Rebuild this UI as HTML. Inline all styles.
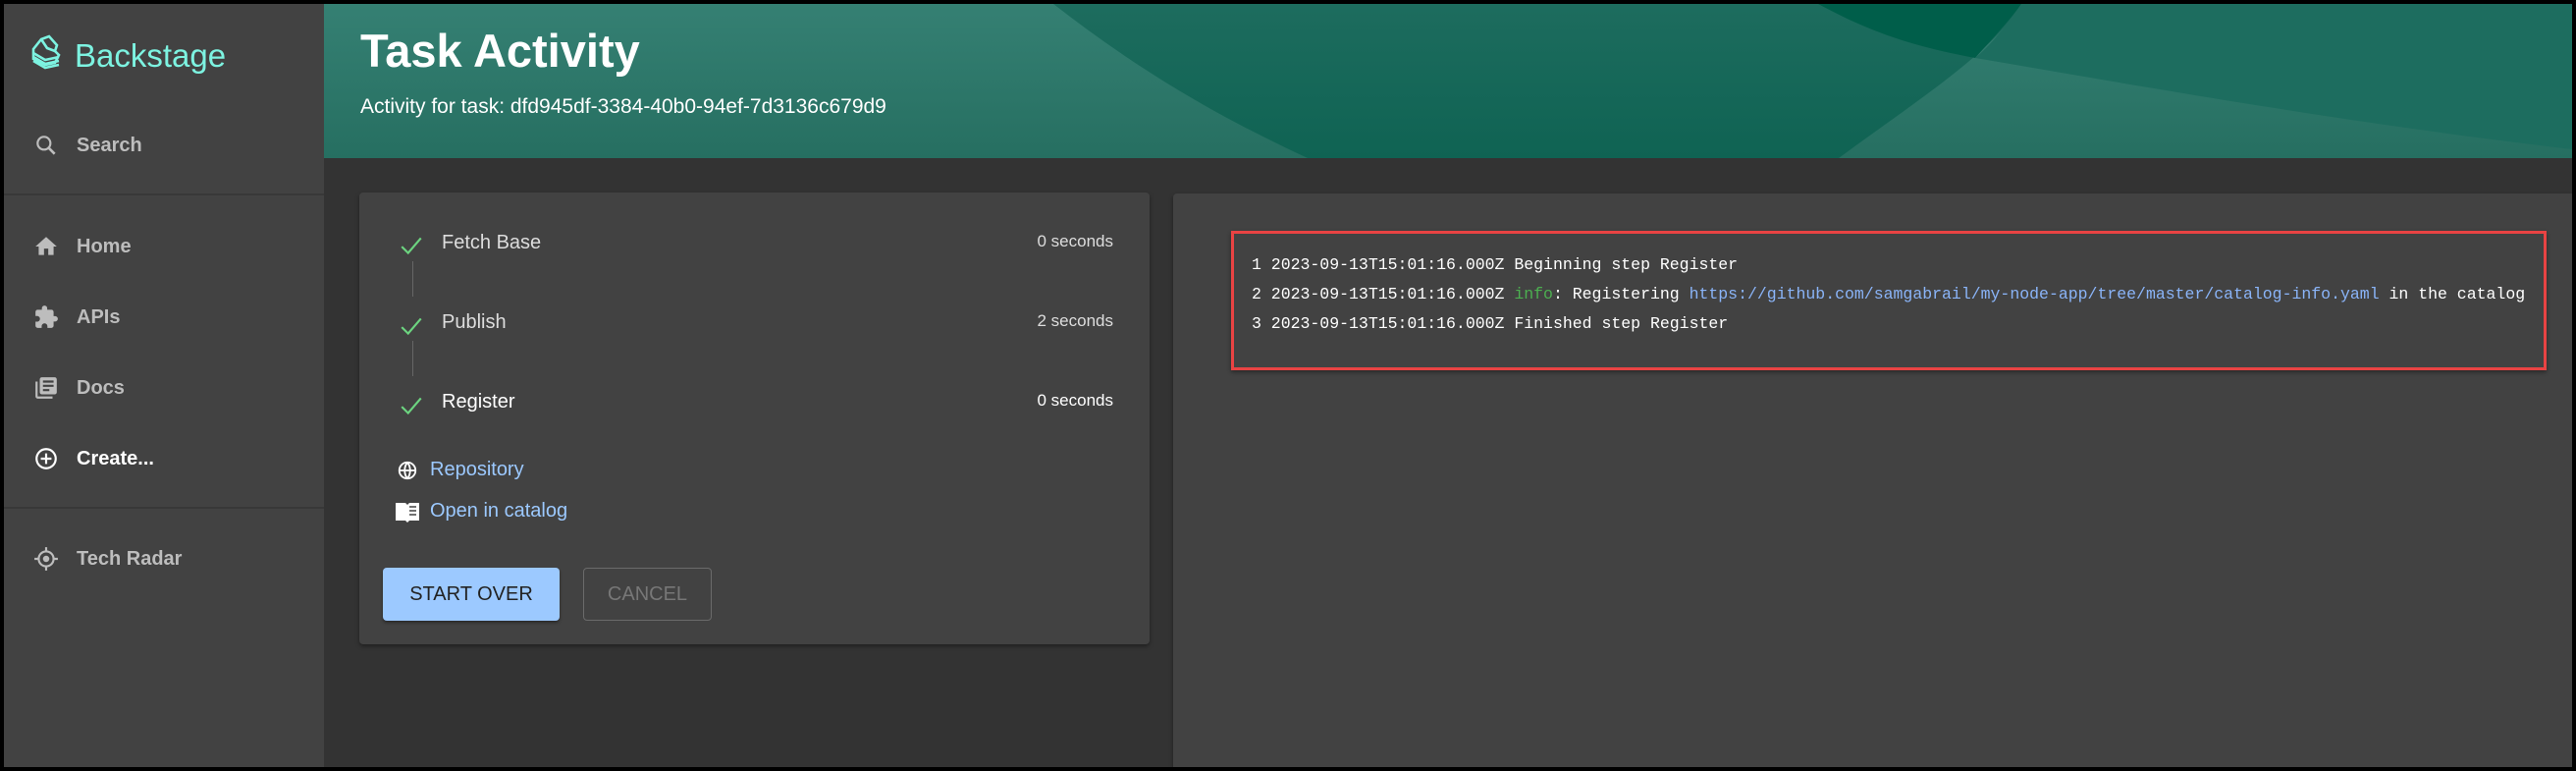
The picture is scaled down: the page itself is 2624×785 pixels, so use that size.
<!DOCTYPE html>
<html><head><meta charset="utf-8"><style>
*{box-sizing:border-box;margin:0;padding:0}
body{width:2624px;height:785px;background:#000;font-family:"Liberation Sans",sans-serif;overflow:hidden;position:relative}
#wrap{position:absolute;left:4px;top:4px;width:2616px;height:777px;background:#333;overflow:hidden}
#side{position:absolute;left:0;top:0;width:326px;height:777px;background:#424242}
.logo{position:absolute;left:72px;top:34px;font-size:33px;color:#7df3e1}
.nav{position:absolute;left:74px;font-size:20px;font-weight:bold;color:#bdbdbd}
.ic{position:absolute;left:30px;width:26px;height:26px}
.div{position:absolute;left:0;width:326px;height:2px;background:#383838}
#hdr{position:absolute;left:326px;top:0;width:2290px;height:157px;overflow:hidden}
h1{position:absolute;left:37px;top:20px;font-size:47px;color:#fff;font-weight:bold}
.sub{position:absolute;left:37px;top:93px;font-size:21px;color:#fff}
.card{position:absolute;background:#424242;box-shadow:0 2px 4px rgba(0,0,0,.4);border-radius:4px}
.st{position:absolute;left:446px;font-size:20px;color:#ddd}
.sec{position:absolute;right:1486px;font-size:17px;color:#ddd}
.vl{position:absolute;left:416px;width:1px;height:36px;background:#666}
.lnk{position:absolute;left:434px;font-size:20px;color:#9cc9ff}
.log{position:absolute;left:1271px;font-family:"Liberation Mono",monospace;font-size:16.5px;color:#fff;white-space:pre}
</style></head><body><div id="wrap">
<div id="side">
<svg style="position:absolute;left:26px;top:30px" width="36" height="40" viewBox="0 0 36 40" fill="none" stroke="#7df3e1" stroke-width="2.6"><path d="M4 16 L12 6 L20 3 L28 12 L26 18 L30 22 L26 30 L16 32 L4 26 Z"/><path d="M4 20 L16 27 L30 24"/><path d="M4 24 L16 31 L30 28"/><path d="M4 28 L16 35 L30 32"/><path d="M12 6 L18 15 L26 18"/></svg>
<div class="logo">Backstage</div>
<svg class="ic" style="top:131px" viewBox="0 0 24 24"><circle cx="10" cy="10" r="6" fill="none" stroke="#bdbdbd" stroke-width="2"/><path d="M14.5 14.5 L20 20" stroke="#bdbdbd" stroke-width="2.4"/></svg>
<div class="nav" style="top:133px">Search</div>
<div class="div" style="top:193px"></div>
<svg class="ic" style="top:234px" viewBox="0 0 24 24"><path d="M10 20v-6h4v6h5v-8h3L12 3 2 12h3v8z" fill="#bdbdbd"/></svg>
<div class="nav" style="top:236px">Home</div>
<svg class="ic" style="top:306px" viewBox="0 0 24 24"><path d="M20.5 11H19V7c0-1.1-.9-2-2-2h-4V3.5a2.5 2.5 0 00-5 0V5H4c-1.1 0-2 .9-2 2v3.8h1.5c1.5 0 2.7 1.2 2.7 2.7S5 16.2 3.5 16.2H2V20c0 1.1.9 2 2 2h3.800v-1.5c0-1.5 1.2-2.7 2.7-2.7s2.7 1.2 2.7 2.7V22H17c1.1 0 2-.9 2-2v-4h1.5a2.5 2.5 0 000-5z" fill="#bdbdbd"/></svg>
<div class="nav" style="top:308px">APIs</div>
<svg class="ic" style="top:378px" viewBox="0 0 24 24"><path d="M4 6H2v14c0 1.1.9 2 2 2h14v-2H4V6zm16-4H8c-1.1 0-2 .9-2 2v12c0 1.1.9 2 2 2h12c1.1 0 2-.9 2-2V4c0-1.1-.9-2-2-2zm-1 9H9V9h10v2zm-4 4H9v-2h6v2zm4-8H9V5h10v2z" fill="#bdbdbd"/></svg>
<div class="nav" style="top:380px">Docs</div>
<svg class="ic" style="top:450px" viewBox="0 0 24 24"><circle cx="12" cy="12" r="9" fill="none" stroke="#fff" stroke-width="2"/><path d="M12 7v10M7 12h10" stroke="#fff" stroke-width="2"/></svg>
<div class="nav" style="top:452px;color:#fff">Create...</div>
<div class="div" style="top:512px"></div>
<svg class="ic" style="top:552px" viewBox="0 0 24 24"><circle cx="12" cy="12" r="7" fill="none" stroke="#bdbdbd" stroke-width="2"/><circle cx="12" cy="12" r="3" fill="#bdbdbd"/><path d="M12 1v4M12 19v4M1 12h4M19 12h4" stroke="#bdbdbd" stroke-width="2"/></svg>
<div class="nav" style="top:554px">Tech Radar</div>
</div>
<div id="hdr">
<svg width="2290" height="157" viewBox="0 0 2290 157">
<defs>
<linearGradient id="g" x1="0" y1="0" x2="0" y2="1"><stop offset="0" stop-color="#358073"/><stop offset="1" stop-color="#266f61"/></linearGradient>
<linearGradient id="d" x1="0" y1="0" x2="0" y2="1"><stop offset="0" stop-color="#1d6c5e"/><stop offset="1" stop-color="#0f6353"/></linearGradient>
</defs>
<rect width="2290" height="157" fill="url(#g)"/>
<path d="M743 0 C820 60 900 110 1002 157 L1543 157 C1620 100 1700 50 1729 0 Z" fill="url(#d)"/>
<path d="M1522 0 L1729 0 C1715 20 1695 40 1682 55 C1600 40 1560 20 1522 0 Z" fill="#005e4a"/>
<path d="M1729 0 L2290 0 L2290 148 C2050 120 1830 80 1682 55 C1700 40 1715 20 1729 0 Z" fill="#1d6d5f"/>
</svg>
<h1>Task Activity</h1>
<div class="sub">Activity for task: dfd945df-3384-40b0-94ef-7d3136c679d9</div>
</div>
<div class="card" style="left:362px;top:192px;width:805px;height:460px"></div>
<div class="card" style="left:1191px;top:193px;width:1430px;height:600px"></div>
<svg style="position:absolute;left:402px;top:233px" width="26" height="26" viewBox="0 0 24 24"><path d="M3 13l6 6L21 5" fill="none" stroke="#6cd480" stroke-width="2"/></svg>
<svg style="position:absolute;left:402px;top:315px" width="26" height="26" viewBox="0 0 24 24"><path d="M3 13l6 6L21 5" fill="none" stroke="#6cd480" stroke-width="2"/></svg>
<svg style="position:absolute;left:402px;top:396px" width="26" height="26" viewBox="0 0 24 24"><path d="M3 13l6 6L21 5" fill="none" stroke="#6cd480" stroke-width="2"/></svg>
<div class="vl" style="top:262px"></div><div class="vl" style="top:343px"></div>
<div class="st" style="top:232px">Fetch Base</div>
<div class="st" style="top:313px">Publish</div>
<div class="st" style="top:394px;color:#fff">Register</div>
<div class="sec" style="top:232px">0 seconds</div>
<div class="sec" style="top:313px">2 seconds</div>
<div class="sec" style="top:394px;color:#fff">0 seconds</div>
<svg style="position:absolute;left:400px;top:464px" width="22" height="22" viewBox="0 0 24 24" fill="none" stroke="#fff" stroke-width="2"><circle cx="12" cy="12" r="9"/><path d="M3 12h18M12 3c-4 5-4 13 0 18M12 3c4 5 4 13 0 18"/></svg>
<div class="lnk" style="top:463px">Repository</div>
<svg style="position:absolute;left:398px;top:506px" width="26" height="22" viewBox="0 0 26 22"><path d="M1 2h10l2 2 2-2h10v18H15l-2 2-2-2H1z" fill="#fff"/><path d="M15 6h7M15 10h7M15 14h7" stroke="#424242" stroke-width="1.5"/></svg>
<div class="lnk" style="top:505px">Open in catalog</div>
<div style="position:absolute;left:386px;top:574px;width:180px;height:54px;background:#9cc9ff;border-radius:4px;box-shadow:0 2px 3px rgba(0,0,0,.4);color:#222;font-size:20px;text-align:center;line-height:54px">START OVER</div>
<div style="position:absolute;left:590px;top:574px;width:131px;height:54px;border:1px solid #6a6a6a;border-radius:4px;color:#777;font-size:20px;text-align:center;line-height:52px">CANCEL</div>
<div style="position:absolute;left:1250px;top:231px;width:1340px;height:142px;border:3px solid #e94343;box-shadow:0 2px 4px rgba(0,0,0,.4)"></div>
<div class="log" style="top:256px">1 2023-09-13T15:01:16.000Z Beginning step Register</div>
<div class="log" style="top:286px">2 2023-09-13T15:01:16.000Z <span style="color:#4caf50">info</span>: Registering <span style="color:#8ab4f8">https://github.com/samgabrail/my-node-app/tree/master/catalog-info.yaml</span> in the catalog</div>
<div class="log" style="top:316px">3 2023-09-13T15:01:16.000Z Finished step Register</div>
</div></body></html>
